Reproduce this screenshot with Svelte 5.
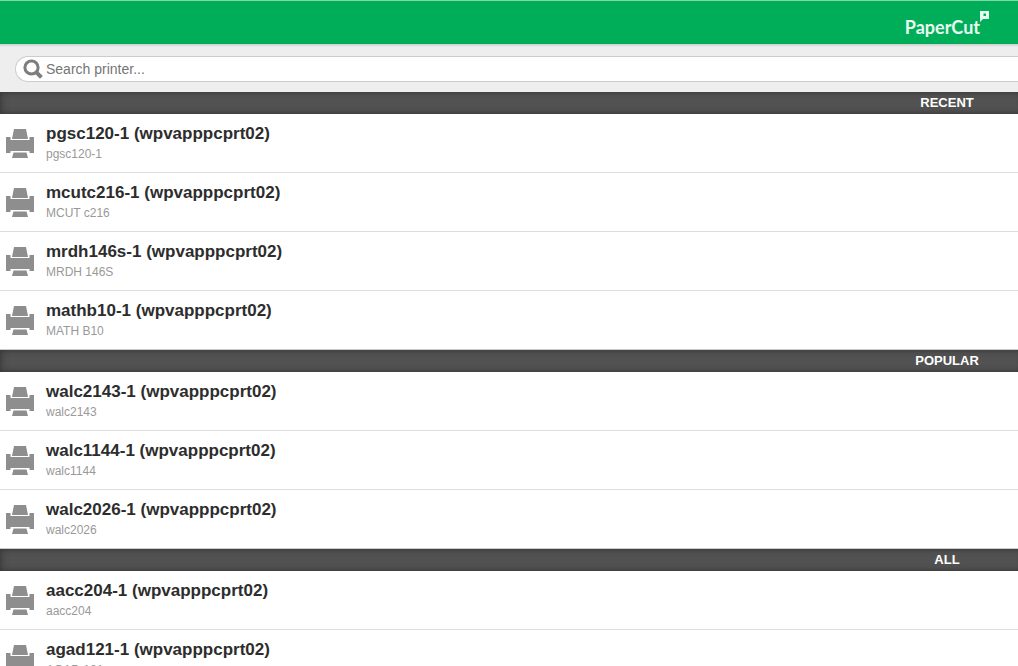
<script>
  let search = "";

  const sections = [
    {
      title: "Recent",
      printers: [
        { name: "pgsc120-1", location: "pgsc120-1" },
        { name: "mcutc216-1", location: "MCUT c216" },
        { name: "mrdh146s-1", location: "MRDH 146S" },
        { name: "mathb10-1", location: "MATH B10" }
      ]
    },
    {
      title: "Popular",
      printers: [
        { name: "walc2143-1", location: "walc2143" },
        { name: "walc1144-1", location: "walc1144" },
        { name: "walc2026-1", location: "walc2026" }
      ]
    },
    {
      title: "All",
      printers: [
        { name: "aacc204-1", location: "aacc204" },
        { name: "agad121-1", location: "AGAD 121" }
      ]
    }
  ];

  const server = "wpvapppcprt02";

  $: term = search.trim().toLowerCase();
  $: visible = sections.map(section => ({
    ...section,
    printers: section.printers.filter(p =>
      `${p.name} ${p.location}`.toLowerCase().includes(term)
    )
  }));
</script>

<style>
  :global(body) {
    margin: 0;
    background: #fff;
  }

  .page {
    height: 100vh;
    overflow: hidden;
    font-family: "Liberation Sans", Arial, sans-serif;
  }

  .topbar {
    display: flex;
    justify-content: flex-end;
    box-sizing: border-box;
    height: 44px;
    padding: 9px 28px 0 0;
    border-top: 1px solid #7dd8a5;
    background: #00ae5a;
  }

  .logo {
    display: flex;
    align-items: flex-start;
    color: #e9faf0;
    font-family: Lato, sans-serif;
    font-size: 18px;
    font-weight: 700;
    line-height: 18px;
    text-decoration: none;
  }

  .logo span {
    padding-top: 8px;
  }

  .search {
    display: flex;
    padding: 12px 0 10px 15px;
    background: linear-gradient(#ccc, #eee 3px);
  }

  .field {
    display: flex;
    align-items: center;
    flex: 1;
    box-sizing: border-box;
    height: 26px;
    padding-left: 7px;
    border: 1px solid #ccc;
    border-right: none;
    border-radius: 13px 0 0 13px;
    background: #fff;
  }

  .field input {
    flex: 1;
    min-width: 0;
    margin-left: 3px;
    padding: 0;
    border: none;
    outline: none;
    background: none;
    color: #333;
    font-family: inherit;
    font-size: 14px;
  }

  .field input::placeholder {
    color: #757575;
  }

  .divider {
    display: flex;
    justify-content: flex-end;
    margin: 0;
    background: #525252;
    box-shadow: inset 8px 0 8px -8px #333, inset 0 6px 6px -6px #333,
      inset 0 -6px 6px -6px #333;
    color: #fff;
    font-size: 13px;
    line-height: 22px;
    text-transform: uppercase;
  }

  .divider span {
    width: 142px;
    text-align: center;
  }

  ul {
    margin: 0;
    padding: 0;
    list-style: none;
  }

  li {
    border-bottom: 1px solid #ddd;
  }

  li:last-child {
    border-bottom-color: #ccc;
  }

  .printer {
    display: flex;
    align-items: center;
    box-sizing: border-box;
    height: 58px;
    padding: 2px 0 0 5px;
    color: #2d2d2d;
    text-decoration: none;
  }

  .details {
    margin-left: 11px;
  }

  .name,
  .location {
    display: block;
    line-height: 20px;
  }

  .name {
    font-size: 17px;
    font-weight: bold;
  }

  .location {
    color: #999;
    font-size: 12px;
  }
</style>

<div class="page">
  <header class="topbar">
    <a class="logo" href="/" aria-label="PaperCut">
      <span>PaperCut</span>
      <svg width="10" height="12" viewBox="0 0 10 12" aria-hidden="true">
        <path d="M0 1h9v8H3l-3 3z" fill="#e9faf0" />
        <path d="M3.500 3.500h2.500v2.500H3.500z" fill="#00ae5a" />
      </svg>
    </a>
  </header>

  <form class="search" on:submit|preventDefault>
    <div class="field">
      <svg width="20" height="20" viewBox="0 0 20 20" aria-hidden="true">
        <circle cx="8.5" cy="8.500" r="6.600" fill="none" stroke="#7d7d7d" stroke-width="3" />
        <path d="M13.2 13.200l5.200 5.200" stroke="#7d7d7d" stroke-width="4" />
      </svg>
      <input type="text" bind:value={search} placeholder="Search printer..." aria-label="Search printer" />
    </div>
  </form>

  {#each visible as section}
    <h2 class="divider"><span>{section.title}</span></h2>
    <ul>
      {#each section.printers as printer}
        <li>
          <a class="printer" href="#{printer.name}">
            <svg width="30" height="30" viewBox="0 0 30 30" aria-hidden="true">
              <path d="M9 0h12l2 10H7z" fill="#8e8e8e" />
              <path d="M1 8h4.500v3h19V8H29v16h-4.500v-2h-19v2H1z" fill="#8e8e8e" />
              <path d="M8.500 23.500h13l1.500 5.500H7z" fill="#8e8e8e" />
            </svg>
            <span class="details">
              <span class="name">{printer.name} ({server})</span>
              <span class="location">{printer.location}</span>
            </span>
          </a>
        </li>
      {/each}
    </ul>
  {/each}
</div>
